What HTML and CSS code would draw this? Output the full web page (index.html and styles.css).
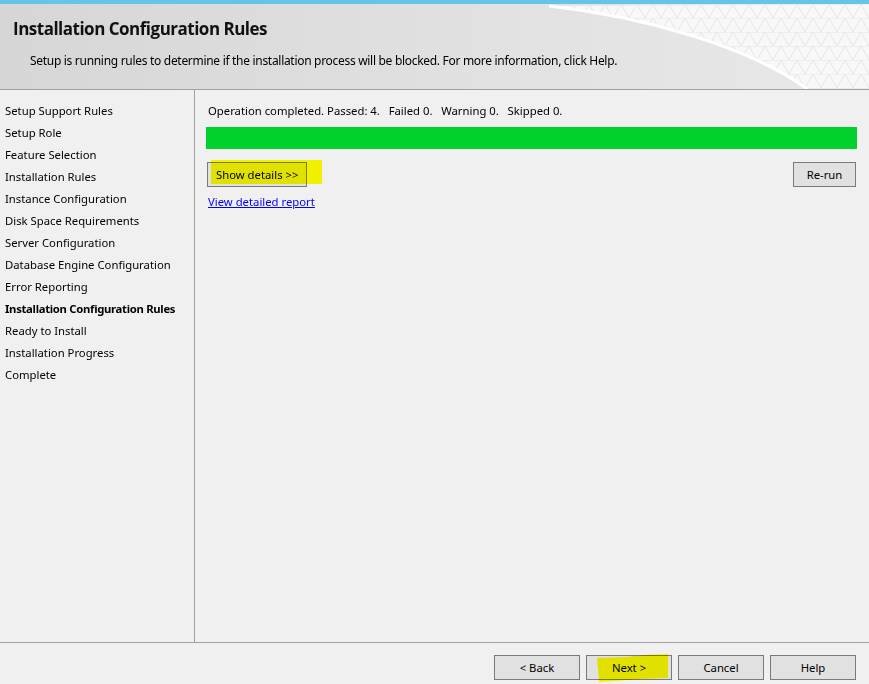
FILE: index.html
```html
<!DOCTYPE html>
<html lang="en">
<head>
    <meta charset="UTF-8">
    <title>Installation Configuration Rules</title>
    <link rel="stylesheet" href="styles.css">
</head>
<body>

<div class="banner"></div>

<!-- header -->
<div class="header">
    <svg class="header-art" width="320" height="85" viewBox="0 0 320 85">
        <defs>
            <pattern id="mesh" width="16" height="14" patternUnits="userSpaceOnUse">
                <path d="M0 14 L8 0 L16 14 M0 0 L16 0" stroke="#e4e4e4" stroke-width="1" fill="none"/>
            </pattern>
            <clipPath id="band">
                <path d="M0 2 C90 12 200 42 258 85 L320 85 L320 0 Z"/>
            </clipPath>
        </defs>
        <path d="M0 2 C90 12 200 42 258 85 L320 85 L320 0 Z" fill="#f8f8f8"/>
        <g clip-path="url(#band)">
            <rect x="0" y="0" width="320" height="85" fill="url(#mesh)"/>
        </g>
        <path d="M0 2 C90 12 200 42 258 85" stroke="#ffffff" stroke-width="3" fill="none"/>
    </svg>
    <h1 class="title">Installation Configuration Rules</h1>
    <p class="subtitle">Setup is running rules to determine if the installation process will be blocked. For more information, click Help.</p>
</div>

<div class="content">
    <ul class="steps">
        <li>Setup Support Rules</li>
        <li>Setup Role</li>
        <li>Feature Selection</li>
        <li>Installation Rules</li>
        <li>Instance Configuration</li>
        <li>Disk Space Requirements</li>
        <li>Server Configuration</li>
        <li>Database Engine Configuration</li>
        <li>Error Reporting</li>
        <li class="current">Installation Configuration Rules</li>
        <li>Ready to Install</li>
        <li>Installation Progress</li>
        <li>Complete</li>
    </ul>

    <div class="main">
        <div class="status">Operation completed. Passed: 4.&nbsp;&nbsp; Failed 0.&nbsp;&nbsp; Warning 0.&nbsp;&nbsp; Skipped 0.</div>
        <div class="progress"></div>
        <div class="actions">
            <button class="btn details-btn">Show details &gt;&gt;
                <span class="marker marker-details"></span>
            </button>
            <button class="btn rerun-btn">Re-run</button>
        </div>
        <a href="#" class="report-link">View detailed report</a>
    </div>
</div>

<div class="footer">
    <button class="btn">&lt; Back</button>
    <button class="btn next-btn">Next &gt;
        <svg class="marker-next" width="76" height="30" viewBox="0 0 76 30">
            <polygon points="2,5 30,4 50,2 73,1 73,25 45,26 20,28 4,29" fill="#ffff00"/>
        </svg>
    </button>
    <button class="btn">Cancel</button>
    <button class="btn">Help</button>
</div>

</body>
</html>
```

FILE: styles.css
```css
body {
    margin: 0;
    padding: 0;
    background-color: #f0f0f0;
    font-family: 'Noto Sans', 'Liberation Sans', Arial, sans-serif;
    font-size: 11.3px;
    color: #000;
    width: 869px;
    height: 684px;
    overflow: hidden;
}

.banner {
    height: 4px;
    background-color: #63c6e8;
}

.header {
    position: relative;
    height: 85px;
    border-bottom: 1px solid #a0a0a0;
    background: linear-gradient(to right, #d6d6d6, #e2e2e2 60%, #e8e8e8);
    overflow: hidden;
}

.header-art {
    position: absolute;
    right: 0;
    top: 0;
}

.title {
    position: relative;
    margin: 0;
    padding: 13px 0 0 13px;
    font-family: 'Open Sans', 'Liberation Sans', sans-serif;
    font-size: 17px;
    font-weight: bold;
    letter-spacing: -0.5px;
    color: #111;
    line-height: 24px;
}

.subtitle {
    position: relative;
    margin: 12px 0 0 30px;
    font-size: 12px;
    line-height: 16px;
    letter-spacing: -0.3px;
}

.content {
    display: flex;
    height: 552px;
}

.steps {
    list-style: none;
    margin: 0;
    padding: 10px 0 0 5px;
    width: 189px;
    border-right: 1px solid #a0a0a0;
}

.steps li {
    line-height: 22px;
    white-space: nowrap;
}

.steps .current {
    font-weight: bold;
    letter-spacing: -0.3px;
}

.main {
    flex: 1;
    padding: 10px 12px 0 11px;
}

.status {
    line-height: 22px;
    padding-left: 2px;
}

.progress {
    margin-top: 5px;
    height: 22px;
    background-color: #00d12c;
}

.actions {
    display: flex;
    justify-content: space-between;
    margin: 13px 1px 0 1px;
}

.btn {
    position: relative;
    height: 25px;
    padding: 0 8px;
    background-color: #e1e1e1;
    border: 1px solid #7a7a7a;
    font-family: 'Noto Sans', 'Liberation Sans', Arial, sans-serif;
    font-size: 11.3px;
    color: #000;
    white-space: nowrap;
}

.details-btn {
    width: 100px;
    text-align: left;
}

.rerun-btn {
    width: 63px;
}

.marker {
    position: absolute;
    background-color: #ffff00;
    mix-blend-mode: multiply;
}

.marker-details {
    left: 3px;
    top: -3px;
    width: 111px;
    height: 24px;
}

.report-link {
    display: inline-block;
    margin-top: 6px;
    margin-left: 2px;
    line-height: 18px;
    color: #0000ff;
}

.footer {
    display: flex;
    justify-content: flex-end;
    gap: 6px;
    height: 41px;
    border-top: 1px solid #a0a0a0;
    padding: 12px 13px 0 0;
    box-sizing: border-box;
}

.footer .btn {
    width: 86px;
}

.marker-next {
    position: absolute;
    left: 8px;
    top: -3px;
    mix-blend-mode: multiply;
}
```
